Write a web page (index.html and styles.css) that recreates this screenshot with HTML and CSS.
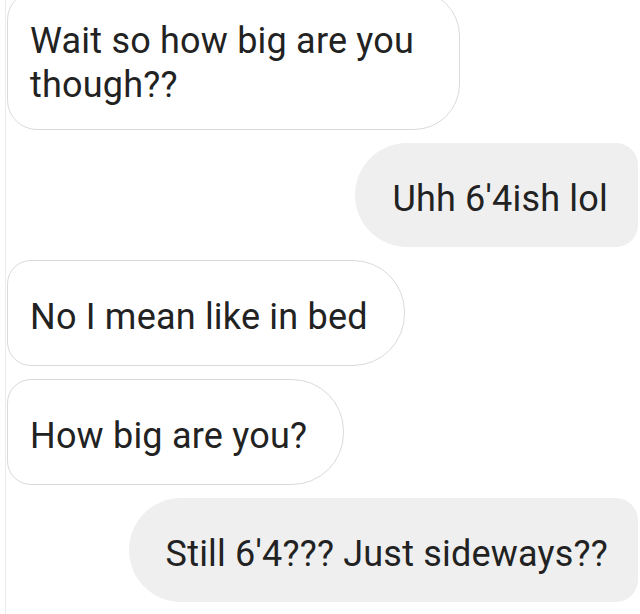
FILE: index.html
```html
<!DOCTYPE html>
<html lang="en">
<head>
    <meta charset="UTF-8">
    <meta name="viewport" content="width=device-width, initial-scale=1.0">
    <title>Messages</title>
    <link rel="stylesheet" href="styles.css">
</head>
<body>

    <div class="thread">
        <div class="bubble received first">Wait so how big are you though??</div>
        <div class="bubble sent">Uhh 6'4ish lol</div>
        <div class="bubble received">No I mean like in bed</div>
        <div class="bubble received">How big are you?</div>
        <div class="bubble sent">Still 6'4??? Just sideways??</div>
    </div>

</body>
</html>
```
FILE: styles.css
```css
* {
    margin: 0;
    padding: 0;
    box-sizing: border-box;
}

body {
    background: #ffffff;
    font-family: Roboto, "Noto Sans", Arial, sans-serif;
    color: #222222;
    overflow: hidden;
    height: 614px;
}

.thread {
    display: flex;
    flex-direction: column;
    gap: 13px;
    padding-left: 6px;
    border-left: 1px solid #ececec;
    margin-left: 5px;
    height: 100%;
}

.bubble {
    font-size: 36px;
    line-height: 44px;
    letter-spacing: 0.2px;
    max-width: 453px;
    padding: 34px 36px 26px 22px;
}

.received {
    align-self: flex-start;
    background: #ffffff;
    border: 1.5px solid #dadada;
    border-radius: 24px 52px 52px 24px;
    margin-left: -5px;
}

.first {
    margin-top: -10px;
    padding-top: 28px;
    padding-bottom: 22px;
    border-radius: 30px 46px 46px 30px;
}

.sent {
    align-self: flex-end;
    background: #efefef;
    border-radius: 52px 22px 22px 52px;
    padding: 34px 30px 26px 37px;
    margin-right: 2px;
    max-width: none;
}
```
